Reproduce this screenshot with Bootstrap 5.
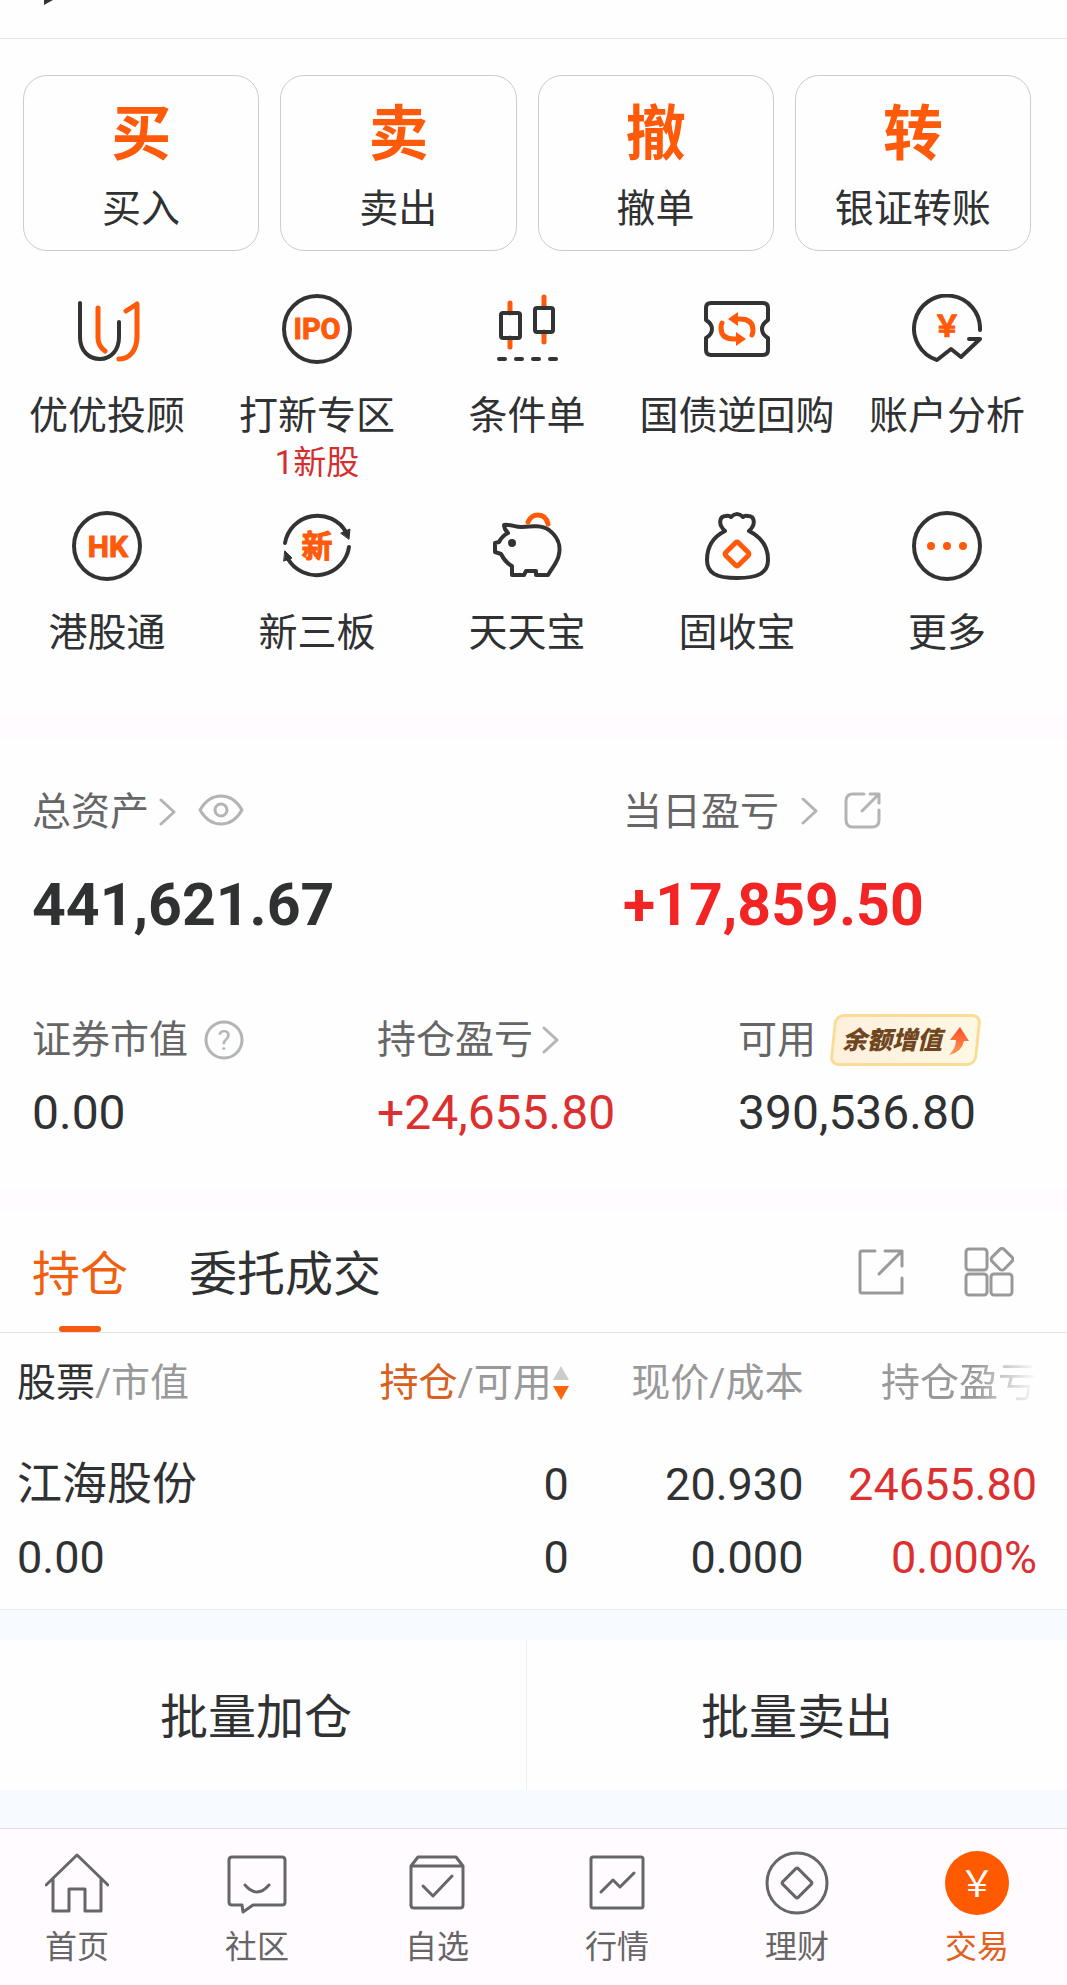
<!DOCTYPE html>
<html lang="zh-CN">
<head>
<meta charset="utf-8">
<meta name="viewport" content="width=device-width, initial-scale=1">
<title>交易</title>
<link href="https://cdn.jsdelivr.net/npm/bootstrap@5.3.0/dist/css/bootstrap.min.css" rel="stylesheet">
<style>
  :root { --ink:#303132; --soft:#666; --pale:#999; --line:#e2e2e2; --brand:#ff5a0a; --up:#dc3030; --haze:#fffbff; --ice:#f7fbff; }
  body { font-family:Roboto,"Noto Sans CJK SC",sans-serif; font-size:39px; line-height:40px; color:var(--ink); background:#fefefe; }
  a { color:inherit; text-decoration:none; }
  button { color:inherit; background:none; border:0; padding:0; }
  svg { display:block; flex:none; fill:none; stroke-linecap:round; stroke-linejoin:round; }
  svg text { font-family:Roboto,"Noto Sans CJK SC",sans-serif; font-weight:700; text-anchor:middle; stroke-linejoin:round; }
  svg .thin { font-weight:400; stroke:none; }
  .band { height:24px; background:var(--haze); }
  .topstrip { height:39px; border-bottom:1px solid var(--line); padding-left:44px; }
  .quick { padding:36px 36px 0 23px; gap:21px; }
  .quick-btn { flex:1 1 0; border:1px solid #ccc; border-radius:24px; padding:27px 0 21px; text-align:center; }
  .quick-glyph { font-size:60px; line-height:64px; font-weight:700; color:var(--brand); margin-bottom:22px; }
  .tools { padding:43px 15px 62px 2px; row-gap:30px; --bs-gutter-x:0; }
  .tool { display:flex; flex-direction:column; align-items:center; white-space:nowrap; }
  .tool svg { margin-bottom:32px; stroke-width:4; }
  .tool-note { font-size:33px; line-height:36px; margin-top:9px; color:#d32f2f; }
  .ink { stroke:#333; } .org { stroke:var(--brand); stroke-width:5; } .orgfill { fill:var(--brand); }
  .assets { padding:53px 0 51px 32px; }
  .assets-top { display:grid; grid-template-columns:591fr 444fr; }
  .assets-sub { display:grid; grid-template-columns:345fr 361fr 329fr; margin-top:79px; }
  .cap { display:flex; align-items:center; color:var(--soft); white-space:nowrap; height:40px; }
  .assets-sub .cap { height:52px; }
  .cap svg { stroke:#b4b4b4; stroke-width:3; }
  .cap-btn { margin-left:21px; }
  .total { font-size:59px; line-height:60px; font-weight:700; margin-top:43px; }
  .sum { font-size:48px; line-height:48px; margin-top:23px; }
  .up { color:var(--up); } .up-strong { color:#f32424; }
  .promo { position:relative; z-index:0; display:flex; align-items:center; gap:5px; height:52px; padding:2px 12px 0; margin-left:14px; font-size:25px; font-style:italic; font-weight:900; color:#70461f; }
  .promo::before { content:""; position:absolute; z-index:-1; inset:0 2px; border:3px solid #fbdc95; border-radius:9px; background:linear-gradient(90deg,#fff0dc,#fff8e4); transform:skewX(-6deg); }
  .promo svg { stroke:none; }
  .tabs { height:121px; border-bottom:1px solid var(--line); padding:0 53px 0 32px; font-size:48px; line-height:48px; }
  .tabs .tab { height:120px; padding-top:5px; }
  .tabs .tab + .tab { margin-left:61px; }
  .tab.active { position:relative; color:#f0600f; }
  .tab.active::after { content:""; position:absolute; left:50%; bottom:0; width:42px; height:6px; margin-left:-21px; border-radius:3px; background:#f55a0e; }
  .tabs svg { stroke:var(--pale); stroke-width:3; }
  .tab-tool + .tab-tool { margin-left:59px; }
  .holdings { width:100%; table-layout:fixed; border-bottom:1px solid #e9ecef; }
  .holdings th { font-weight:400; color:var(--pale); padding:30px 0 0; white-space:nowrap; }
  .holdings td { font-size:45px; line-height:48px; padding:58px 0 27px; }
  .holdings td div + div { margin-top:25px; }
  .holdings th:first-child, .holdings td:first-child { padding-left:17px; }
  .holdings th:last-child, .holdings td:last-child { padding-right:30px; }
  .head-main { color:var(--ink); } .head-sorted { color:#d8601c; }
  .fade-out { -webkit-mask-image:linear-gradient(90deg,#000 60%,transparent 100%); mask-image:linear-gradient(90deg,#000 60%,transparent 100%); }
  .bulk { background:var(--ice); padding:30px 0 38px; }
  .bulk button { background:#fefefe; height:150px; font-size:48px; padding-top:5px; }
  .bulk button:first-child { flex:0 0 49.4%; border-right:1px solid #eceff2; padding-right:14px; }
  .tabbar { background:var(--haze); border-top:1px solid #dddfe2; padding:22px 58px 20px 45px; }
  .tabbar a { width:64px; font-size:32px; line-height:36px; color:var(--soft); text-align:center; white-space:nowrap; }
  .tabbar svg { stroke:#666; stroke-width:3; margin-bottom:14px; }
  .tabbar a.active { color:#e0601c; }
</style>
</head>
<body>
<header class="topstrip"><svg width="9" height="6" viewBox="0 0 9 6"><path d="M0 0H9L0 5Z" fill="#333"/></svg></header>

<main>
  <section class="quick d-flex">
    <button class="quick-btn"><div class="quick-glyph">买</div>买入</button>
    <button class="quick-btn"><div class="quick-glyph">卖</div>卖出</button>
    <button class="quick-btn"><div class="quick-glyph">撤</div>撤单</button>
    <button class="quick-btn"><div class="quick-glyph">转</div>银证转账</button>
  </section>

  <nav class="tools d-flex flex-wrap row-cols-5">
    <a class="tool" href="#"><svg width="70" height="70"><path class="ink" d="M8 9V43C8 57 17 65 28 65S47 56 47 43V28"/><path class="org" d="M26 14V44Q26 52 33 57M54 17L65 10V42C65 56 58 65 47 65"/></svg>优优投顾</a>
    <a class="tool" href="#"><svg width="70" height="70"><circle class="ink" cx="35" cy="35" r="33"/><text class="orgfill" x="35" y="45" font-size="29" stroke="#ff5a0a" stroke-width="1">IPO</text></svg>打新专区<span class="tool-note">1新股</span></a>
    <a class="tool" href="#"><svg width="70" height="70"><path class="org" d="M18 9V19M18 44V53M52 3V13M52 38V48"/><g class="ink"><rect x="9" y="19" width="19" height="25" rx="2"/><rect x="43" y="14" width="18" height="24" rx="2"/><path d="M7 65H13M24 65H30M41 65H47M58 65H64"/></g></svg>条件单</a>
    <a class="tool" href="#"><svg width="70" height="70"><path class="ink" d="M9 9H61Q66 9 66 14V26C58 31 58 39 66 44V56Q66 61 61 61H9Q4 61 4 56V44C12 39 12 31 4 26V14Q4 9 9 9Z"/><path class="org" d="M34 25H38Q51 25 51 36Q51 39 50 41M36 45H32Q19 45 19 34Q19 31 20 29"/><path class="orgfill" d="M26 25L36 18V32ZM44 45L34 38V52Z"/></svg>国债逆回购</a>
    <a class="tool" href="#"><svg width="70" height="70"><path class="ink" d="M68 36A33 33 0 1 0 25 66L39 55L49 63L68 45H57"/><text class="orgfill" x="35" y="43" font-size="29" stroke="#ff5a0a" stroke-width="1">￥</text></svg>账户分析</a>
    <a class="tool" href="#"><svg width="70" height="70"><circle class="ink" cx="35" cy="35" r="33"/><text class="orgfill" x="36" y="46" font-size="30" stroke="#ff5a0a" stroke-width="1">HK</text></svg>港股通</a>
    <a class="tool" href="#"><svg width="70" height="70"><path class="ink" d="M3 32A33 33 0 0 1 64 21M67 36A33 33 0 0 1 6 48"/><path fill="#333" class="ink" stroke-width="1" d="M59 22L68 18L67 28ZM3 40L10 47L2 50Z"/><text class="orgfill" x="35" y="46" font-size="31" stroke="#ff5a0a" stroke-width="1">新</text></svg>新三板</a>
    <a class="tool" href="#"><svg width="70" height="70"><path class="ink" d="M12 14C18 13 23 16 29 16C40 15 50 14 57 19C65 25 69 34 67 43C66 51 60 57 56 64H44V60H34L32 64H20V55C14 52 11 47 9 43L3 41V32L7 31C9 27 12 24 16 22Q12 18 12 14Z"/><circle cx="20" cy="32" r="4" fill="#333"/><path class="org" d="M36 11Q39 4 46 4Q54 4 56 13"/></svg>天天宝</a>
    <a class="tool" href="#"><svg width="70" height="70"><path class="ink" d="M23 20C11 26 5 36 5 49C5 62 14 67 35 67S66 62 66 49C66 36 59 26 47 20C54 14 53 5 46 5Q43 4 41 6Q35 0 29 6Q27 4 24 5C17 5 16 14 23 20Z"/><rect class="org" x="26" y="34" width="18" height="18" rx="2" transform="rotate(45 35 43)"/></svg>固收宝</a>
    <a class="tool" href="#"><svg width="70" height="70"><circle class="ink" cx="35" cy="35" r="33"/><g class="orgfill"><circle cx="19" cy="35" r="4"/><circle cx="35" cy="35" r="4"/><circle cx="51" cy="35" r="4"/></g></svg>更多</a>
  </nav>

  <div class="band"></div>

  <section class="assets">
    <div class="assets-top">
      <div>
        <div class="cap">总资产<svg class="ms-2" width="20" height="28"><path d="M4 2L17 14L4 26"/></svg><button class="cap-btn" aria-label="显示或隐藏金额"><svg width="46" height="36"><path d="M2 16Q10 2 23 2T44 16Q36 30 23 30T2 16Z"/><circle cx="23" cy="16" r="6"/></svg></button></div>
        <div class="total">441,621.67</div>
      </div>
      <div>
        <div class="cap">当日盈亏<svg class="ms-3" width="28" height="28"><path d="M8 1L21 13L8 25"/></svg><button class="cap-btn" aria-label="分享盈亏"><svg width="38" height="40"><path d="M20 2H9Q2 2 2 9V28Q2 35 9 35H28Q35 35 35 28V18M26 2H35V11M35 2L18 19"/></svg></button></div>
        <div class="total up-strong">+17,859.50</div>
      </div>
    </div>
    <div class="assets-sub">
      <div>
        <div class="cap">证券市值<button class="ms-3" aria-label="说明"><svg width="40" height="40"><circle cx="20" cy="20" r="18"/><text class="thin" x="20" y="30" font-size="28" fill="#b4b4b4">?</text></svg></button></div>
        <div class="sum">0.00</div>
      </div>
      <div>
        <div class="cap">持仓盈亏<svg class="ms-2" width="20" height="28"><path d="M3 2L16 14L3 26"/></svg></div>
        <div class="sum up">+24,655.80</div>
      </div>
      <div>
        <div class="cap">可用<button class="promo">余额增值<svg width="22" height="30"><defs><linearGradient id="rise" x1="0" y1="0" x2="0" y2="1"><stop offset="0" stop-color="#fb4b2a"/><stop offset="1" stop-color="#ff9a50"/></linearGradient></defs><path fill="url(#rise)" d="M13 1L22 15H17Q15 26 2 29Q9 22 9 14H3Z"/></svg></button></div>
        <div class="sum">390,536.80</div>
      </div>
    </div>
  </section>

  <div class="band"></div>

  <section>
    <div class="tabs d-flex align-items-center">
      <button class="tab active">持仓</button>
      <button class="tab">委托成交</button>
      <button class="tab-tool ms-auto" aria-label="分享持仓"><svg width="48" height="48"><path d="M18 3H5Q3 3 3 5V43Q3 45 5 45H45V30M28 3H45V18M45 3L22 26"/></svg></button>
      <button class="tab-tool" aria-label="更多功能"><svg width="50" height="50"><rect x="2" y="2" width="21" height="21" rx="3"/><rect x="2" y="27" width="21" height="21" rx="3"/><rect x="27" y="27" width="21" height="21" rx="3"/><rect x="29" y="4" width="17" height="17" rx="3" transform="rotate(45 38 13)"/></svg></button>
    </div>
    <table class="holdings">
      <colgroup><col style="width:32.8%"><col style="width:20.5%"><col style="width:22%"><col></colgroup>
      <thead>
        <tr>
          <th scope="col"><span class="head-main">股票</span>/市值</th>
          <th scope="col"><div class="d-flex justify-content-end align-items-center"><span class="head-sorted">持仓</span>/可用<svg width="17" height="36"><path fill="#ccc" d="M9 1L17 15H1Z"/><path fill="#ff6410" d="M1 21H17L9 35Z"/></svg></div></th>
          <th scope="col" class="text-end">现价/成本</th>
          <th scope="col" class="text-end"><span class="fade-out">持仓盈亏</span></th>
        </tr>
      </thead>
      <tbody>
        <tr>
          <td><div>江海股份</div><div>0.00</div></td>
          <td class="text-end"><div>0</div><div>0</div></td>
          <td class="text-end"><div>20.930</div><div>0.000</div></td>
          <td class="text-end up"><div>24655.80</div><div>0.000%</div></td>
        </tr>
      </tbody>
    </table>
  </section>

  <section class="bulk d-flex">
    <button>批量加仓</button>
    <button class="flex-fill">批量卖出</button>
  </section>
</main>

<nav class="tabbar d-flex justify-content-between">
  <a href="#"><svg width="64" height="64"><path d="M1 34L32 4L63 34M8 28V60H24V38H40V60H56V28"/></svg>首页</a>
  <a href="#"><svg width="64" height="64"><path d="M7 6H57Q60 6 60 9V51Q60 54 57 54H28L18 61L17 54H7Q4 54 4 51V9Q4 6 7 6ZM20 34Q32 48 44 34"/></svg>社区</a>
  <a href="#"><svg width="64" height="64"><path d="M6 15H58V54Q58 57 55 57H9Q6 57 6 54V15L13 6H51L58 15M18 35L28 45L47 25"/></svg>自选</a>
  <a href="#"><svg width="64" height="64"><rect x="6" y="6" width="52" height="51" rx="2"/><path d="M16 41L28 29L35 36L49 22"/></svg>行情</a>
  <a href="#"><svg width="64" height="64"><circle cx="32" cy="32" r="30"/><rect x="21" y="21" width="22" height="22" rx="2" transform="rotate(45 32 32)"/></svg>理财</a>
  <a href="#" class="active"><svg width="64" height="64"><circle cx="32" cy="32" r="32" fill="#ff5a00"  stroke="none"/><text class="thin" x="32" y="46" font-size="36" fill="#fff">￥</text></svg>交易</a>
</nav>
<script src="https://cdn.jsdelivr.net/npm/bootstrap@5.3.0/dist/js/bootstrap.bundle.min.js"></script>
</body>
</html>
